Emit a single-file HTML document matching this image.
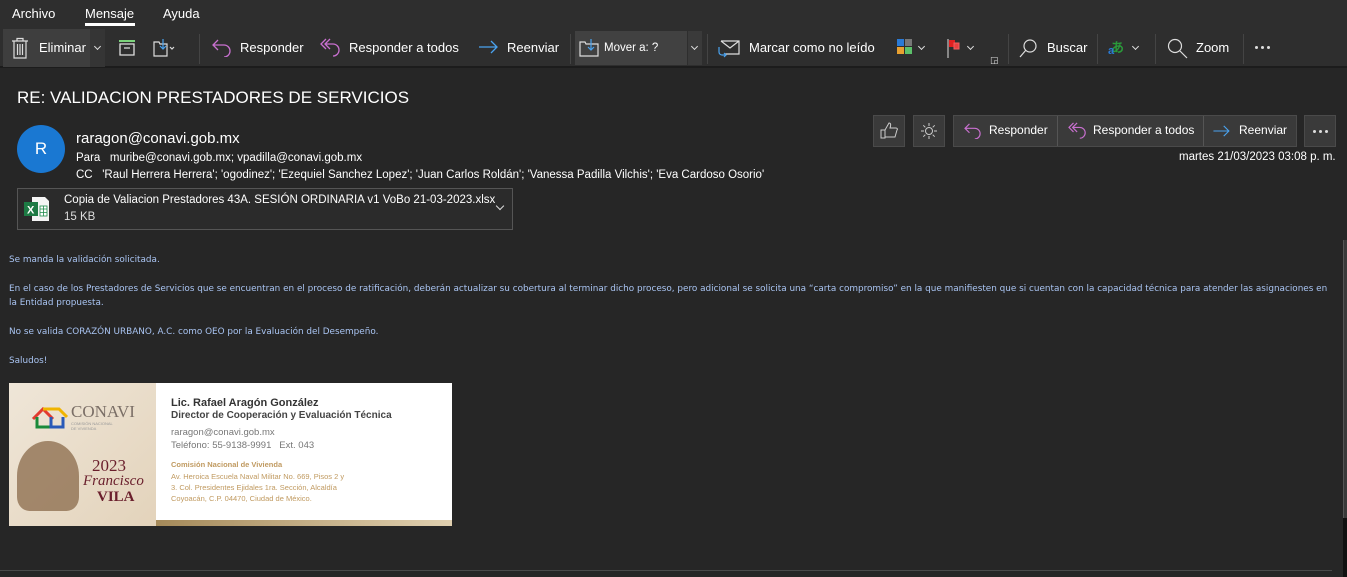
<!DOCTYPE html>
<html><head><meta charset="utf-8"><style>
*{margin:0;padding:0;box-sizing:border-box}
body{width:1347px;height:577px;overflow:hidden;background:#262626;font-family:"Segoe UI","Liberation Sans","DejaVu Sans",sans-serif;color:#fff;position:relative}
.a{position:absolute;white-space:nowrap}
.top{position:absolute;left:0;top:0;width:1347px;height:28px;background:#2e2e2e}
.tb{position:absolute;left:0;top:28px;width:1347px;height:40px;background:#2e2e2e;border-bottom:2px solid #1c1c1c}
.t{font-size:13px;color:#fff}
.sep{position:absolute;top:34px;width:1px;height:30px;background:#444}
.btn{position:absolute;border:1px solid #4a4a4a;background:#3a3a3a}
.body{font-family:"DejaVu Sans","Liberation Sans",sans-serif;font-size:8.85px;color:#a9c4f2}
.chev{position:absolute;width:5px;height:5px;border-right:1.3px solid #ddd;border-bottom:1.3px solid #ddd;transform:rotate(45deg)}
</style></head><body>
<div class="top"></div>
<div class="a t" style="left:12px;top:6px">Archivo</div>
<div class="a t" style="left:85px;top:6px">Mensaje</div>
<div class="a" style="left:85px;top:23px;width:50px;height:3px;background:#fff"></div>
<div class="a t" style="left:163px;top:6px">Ayuda</div>
<div class="tb"></div>
<div class="a" style="left:3px;top:29px;width:87px;height:38px;background:#3e3e3e"></div>
<div class="a" style="left:90px;top:29px;width:15px;height:38px;background:#353535"></div>
<svg class="a" style="left:10px;top:37px" width="20" height="22" viewBox="0 0 20 22" fill="none" stroke="#ddd" stroke-width="1.2"><path d="M2 4h16M7 4V1.5h6V4M4 4v17h12V4M7.5 7v11M10 7v11M12.5 7v11"/></svg>
<div class="a t" style="left:39px;top:40px">Eliminar</div>
<div class="chev" style="left:95px;top:44px"></div>
<svg class="a" style="left:118px;top:39px" width="18" height="18" viewBox="0 0 18 18" fill="none" stroke-width="1.3"><path d="M1 2h16" stroke="#7cd37c" stroke-width="2"/><path d="M2 5h14v11H2zM6 9h6" stroke="#ddd"/></svg>
<svg class="a" style="left:153px;top:38px" width="22" height="20" viewBox="0 0 22 20" fill="none" stroke-width="1.2"><path d="M1 4h5l1 2h7v12H1z" stroke="#ddd"/><path d="M10 1v10M7 8l3 3 3-3" stroke="#4aa3f0"/><path d="M17 9l2 2 2-2" stroke="#ddd"/></svg>
<div class="sep" style="left:199px"></div>
<svg class="a" style="left:212px;top:39px" width="20" height="18" viewBox="0 0 20 18" fill="none" stroke="#c970d0" stroke-width="1.3"><path d="M6 1L1 6l5 5M1 6h11a6 6 0 0 1 0 12"/></svg>
<div class="a t" style="left:240px;top:40px">Responder</div>
<svg class="a" style="left:320px;top:38px" width="22" height="20" viewBox="0 0 22 20" fill="none" stroke="#c970d0" stroke-width="1.3"><path d="M6 1L1 6l5 5M10 1L5 6l5 5M5 6h8a6 6 0 0 1 0 12"/></svg>
<div class="a t" style="left:349px;top:40px">Responder a todos</div>
<svg class="a" style="left:479px;top:40px" width="20" height="14" viewBox="0 0 20 14" fill="none" stroke="#4aa3f0" stroke-width="1.3"><path d="M0 7h18M12 1l6 6-6 6"/></svg>
<div class="a t" style="left:507px;top:40px">Reenviar</div>
<div class="sep" style="left:570px"></div>
<div class="a" style="left:575px;top:31px;width:112px;height:34px;background:#414141"></div>
<div class="a" style="left:688px;top:31px;width:14px;height:34px;background:#3a3a3a"></div>
<svg class="a" style="left:579px;top:38px" width="22" height="20" viewBox="0 0 22 20" fill="none" stroke-width="1.2"><path d="M1 4h5l1 2h12v12H1z" stroke="#ddd"/><path d="M12 1v11M9 9l3 3 3-3" stroke="#4aa3f0"/></svg>
<div class="a" style="left:604px;top:42px;font-size:11.5px">Mover a: ?</div>
<div class="chev" style="left:692px;top:44px"></div>
<div class="sep" style="left:707px"></div>
<svg class="a" style="left:717px;top:39px" width="24" height="20" viewBox="0 0 24 20" fill="none" stroke-width="1.2"><path d="M4 2h18v13H8M4 2l9 7 9-7" stroke="#ddd"/><path d="M2 8v5a3 3 0 0 0 3 3h4M7 14l2 2-2 2" stroke="#4aa3f0"/></svg>
<div class="a t" style="left:749px;top:40px">Marcar como no leído</div>
<div class="a" style="left:897px;top:39px;width:7px;height:7px;background:#2a7ad5"></div>
<div class="a" style="left:905px;top:39px;width:7px;height:7px;background:#777"></div>
<div class="a" style="left:897px;top:47px;width:7px;height:7px;background:#e8a030"></div>
<div class="a" style="left:905px;top:47px;width:7px;height:7px;background:#5cc06a"></div>
<div class="chev" style="left:919px;top:44px"></div>
<svg class="a" style="left:947px;top:38px" width="16" height="20" viewBox="0 0 16 20"><path d="M1 1v19" stroke="#ddd"/><rect x="2" y="2" width="6" height="7" fill="#e02020"/><rect x="7" y="5" width="5" height="6" fill="#e84040" stroke="#f06060"/></svg>
<div class="chev" style="left:968px;top:44px"></div>
<div class="a" style="left:990px;top:55px;font-size:9px;color:#ddd">◲</div>
<div class="sep" style="left:1008px"></div>
<svg class="a" style="left:1018px;top:38px" width="20" height="20" viewBox="0 0 20 20" fill="none" stroke="#ddd" stroke-width="1.2"><circle cx="12" cy="8" r="6"/><path d="M8 12l-6 7"/></svg>
<div class="a t" style="left:1047px;top:40px">Buscar</div>
<div class="sep" style="left:1097px"></div>
<div class="a" style="left:1111px;top:37px;font-size:13px;color:#2a9a3a;font-weight:bold">あ</div>
<div class="a" style="left:1108px;top:45px;font-size:11px;color:#2a7ad5;font-weight:bold">a</div>
<div class="chev" style="left:1133px;top:44px"></div>
<div class="sep" style="left:1155px"></div>
<svg class="a" style="left:1167px;top:38px" width="22" height="22" viewBox="0 0 22 22" fill="none" stroke="#ddd" stroke-width="1.2"><circle cx="8" cy="8" r="6.5"/><path d="M13 13l7 7"/></svg>
<div class="a t" style="left:1196px;top:40px">Zoom</div>
<div class="sep" style="left:1243px"></div>
<div class="a" style="left:1255px;top:46px;width:3px;height:3px;background:#ddd;border-radius:50%;box-shadow:6px 0 #ddd,12px 0 #ddd"></div>

<div class="a" style="left:17px;top:88px;font-size:17px;color:#fff">RE: VALIDACION PRESTADORES DE SERVICIOS</div>
<div class="a" style="left:17px;top:125px;width:48px;height:48px;border-radius:50%;background:#1a78d2;color:#fff;font-size:17px;text-align:center;line-height:48px">R</div>
<div class="a" style="left:76px;top:130px;font-size:15px;color:#fff">raragon@conavi.gob.mx</div>
<div class="a" style="left:76px;top:152px;font-size:11.5px;color:#fff">Para&nbsp;&nbsp; muribe@conavi.gob.mx; vpadilla@conavi.gob.mx</div>
<div class="a" style="left:76px;top:169px;font-size:11.5px;color:#fff">CC&nbsp;&nbsp; 'Raul Herrera Herrera'; 'ogodinez'; 'Ezequiel Sanchez Lopez'; 'Juan Carlos Roldán'; 'Vanessa Padilla Vilchis'; 'Eva Cardoso Osorio'</div>
<div class="a" style="left:17px;top:188px;width:496px;height:42px;border:1px solid #555;background:#2b2b2b"></div>
<svg class="a" style="left:23px;top:195px" width="28" height="28" viewBox="0 0 28 28"><path d="M9 2h13l4 4v20H9z" fill="#f4f4f4"/><rect x="17" y="11" width="7" height="10" fill="#fff" stroke="#1d8a4a" stroke-width="0.8"/><path d="M17 14h7M17 17.5h7M20.5 11v10" stroke="#1d8a4a" stroke-width="0.8"/><rect x="1" y="7" width="14" height="14" fill="#1d7a44"/><text x="4" y="18.5" font-size="11" font-weight="bold" fill="#fff" font-family="Liberation Sans">X</text></svg>
<div class="a" style="left:64px;top:194px;font-size:11.5px;color:#fff">Copia de Valiacion Prestadores 43A. SESIÓN ORDINARIA v1 VoBo 21-03-2023.xlsx</div>
<div class="a" style="left:64px;top:211px;font-size:11.5px;color:#ddd">15 KB</div>
<div class="chev" style="left:497px;top:203px;width:6px;height:6px"></div>

<div class="btn" style="left:873px;top:115px;width:32px;height:32px"></div>
<svg class="a" style="left:879px;top:121px" width="20" height="20" viewBox="0 0 20 20" fill="none" stroke="#ccc" stroke-width="1"><path d="M2 9h4v8H2zM6 9l4-7c2 0 2 2 1 5h6c1 0 2 1 1 2l-2 7H6"/></svg>
<div class="btn" style="left:913px;top:115px;width:32px;height:32px"></div>
<svg class="a" style="left:920px;top:122px" width="18" height="18" viewBox="0 0 18 18" fill="none" stroke="#ccc" stroke-width="1"><circle cx="9" cy="9" r="3.5"/><path d="M9 1v3M9 14v3M1 9h3M14 9h3M3.3 3.3l2 2M12.7 12.7l2 2M3.3 14.7l2-2M12.7 5.3l2-2"/></svg>
<div class="btn" style="left:953px;top:115px;width:344px;height:32px"></div>
<div class="a" style="left:1057px;top:116px;width:1px;height:30px;background:#555"></div>
<div class="a" style="left:1203px;top:116px;width:1px;height:30px;background:#555"></div>
<svg class="a" style="left:964px;top:123px" width="18" height="16" viewBox="0 0 20 18" fill="none" stroke="#c970d0" stroke-width="1.3"><path d="M6 1L1 6l5 5M1 6h11a6 6 0 0 1 0 12"/></svg>
<div class="a" style="left:989px;top:123px;font-size:12px">Responder</div>
<svg class="a" style="left:1068px;top:122px" width="20" height="18" viewBox="0 0 22 20" fill="none" stroke="#c970d0" stroke-width="1.3"><path d="M6 1L1 6l5 5M10 1L5 6l5 5M5 6h8a6 6 0 0 1 0 12"/></svg>
<div class="a" style="left:1093px;top:123px;font-size:12px">Responder a todos</div>
<svg class="a" style="left:1213px;top:125px" width="18" height="12" viewBox="0 0 20 14" fill="none" stroke="#4aa3f0" stroke-width="1.3"><path d="M0 7h18M12 1l6 6-6 6"/></svg>
<div class="a" style="left:1239px;top:123px;font-size:12px">Reenviar</div>
<div class="btn" style="left:1304px;top:115px;width:32px;height:32px"></div>
<div class="a" style="left:1313px;top:130px;width:3px;height:3px;background:#ddd;border-radius:50%;box-shadow:6px 0 #ddd,12px 0 #ddd"></div>
<div class="a" style="left:1179px;top:151px;font-size:11.5px;color:#fff">martes 21/03/2023 03:08 p. m.</div>

<div class="a body" style="left:9px;top:255px">Se manda la validación solicitada.</div>
<div class="a body" style="left:9px;top:284px">En el caso de los Prestadores de Servicios que se encuentran en el proceso de ratificación, deberán actualizar su cobertura al terminar dicho proceso, pero adicional se solicita una “carta compromiso” en la que manifiesten que si cuentan con la capacidad técnica para atender las asignaciones en</div>
<div class="a body" style="left:9px;top:298px">la Entidad propuesta.</div>
<div class="a body" style="left:9px;top:327px">No se valida CORAZÓN URBANO, A.C. como OEO por la Evaluación del Desempeño.</div>
<div class="a body" style="left:9px;top:356px">Saludos!</div>

<div class="a" style="left:9px;top:383px;width:443px;height:143px;background:#fff;overflow:hidden">
 <div class="a" style="left:0;top:0;width:147px;height:143px;background:linear-gradient(135deg,#efe6d8,#e3d3bb)"></div>
 <svg class="a" style="left:20px;top:20px" width="40" height="28" viewBox="0 0 40 28" fill="none" stroke-width="3"><path d="M4 16L14 6l10 10" stroke="#e23a2f"/><path d="M14 6h16l8 8" stroke="#f0b400"/><path d="M8 14v10h14" stroke="#1a8a3a"/><path d="M22 14v10h12V14" stroke="#2a5ab8"/></svg>
 <div class="a" style="left:62px;top:19px;font-family:'Liberation Serif',serif;font-size:17px;color:#7a6e66">CONAVI</div>
 <div class="a" style="left:62px;top:38px;font-size:4px;color:#999">COMISIÓN NACIONAL<br>DE VIVIENDA</div>
 <div class="a" style="left:8px;top:58px;width:62px;height:70px;border-radius:50% 50% 20% 20%;background:#8a6a4a;opacity:.75"></div>
 <div class="a" style="left:83px;top:73px;font-family:'Liberation Serif',serif;font-size:17px;color:#6a1f2c">2023</div>
 <div class="a" style="left:74px;top:90px;font-family:'Liberation Serif',serif;font-style:italic;font-size:15px;color:#6a1f2c">Francisco</div>
 <div class="a" style="left:88px;top:106px;font-family:'Liberation Serif',serif;font-size:15px;color:#6a1f2c;font-weight:bold">VILA</div>
 <div class="a" style="left:147px;top:137px;width:296px;height:6px;background:linear-gradient(90deg,#a58a5a,#e0d0b0)"></div>
 <div class="a" style="left:162px;top:14px;font-size:11px;font-weight:bold;color:#333">Lic. Rafael Aragón González</div>
 <div class="a" style="left:162px;top:27px;font-size:10px;font-weight:bold;color:#444">Director de Cooperación y Evaluación Técnica</div>
 <div class="a" style="left:162px;top:44px;font-size:9.5px;color:#777">raragon@conavi.gob.mx</div>
 <div class="a" style="left:162px;top:57px;font-size:9.5px;color:#777">Teléfono: 55-9138-9991&nbsp;&nbsp; Ext. 043</div>
 <div class="a" style="left:162px;top:77px;font-size:7.5px;font-weight:bold;color:#c09a60">Comisión Nacional de Vivienda</div>
 <div class="a" style="left:162px;top:88px;font-size:7.5px;color:#c09a60;line-height:11px">Av. Heroica Escuela Naval Militar No. 669, Pisos 2 y<br>3. Col. Presidentes Ejidales 1ra. Sección, Alcaldía<br>Coyoacán, C.P. 04470, Ciudad de México.</div>
</div>
<div class="a" style="left:0;top:570px;width:1332px;height:1px;background:#4a4a4a"></div>
<div class="a" style="left:1343px;top:240px;width:4px;height:337px;background:#3a3a3a;border-left:1px solid #555"></div>
<div class="a" style="left:1343px;top:518px;width:4px;height:59px;background:#111"></div>
</body></html>
